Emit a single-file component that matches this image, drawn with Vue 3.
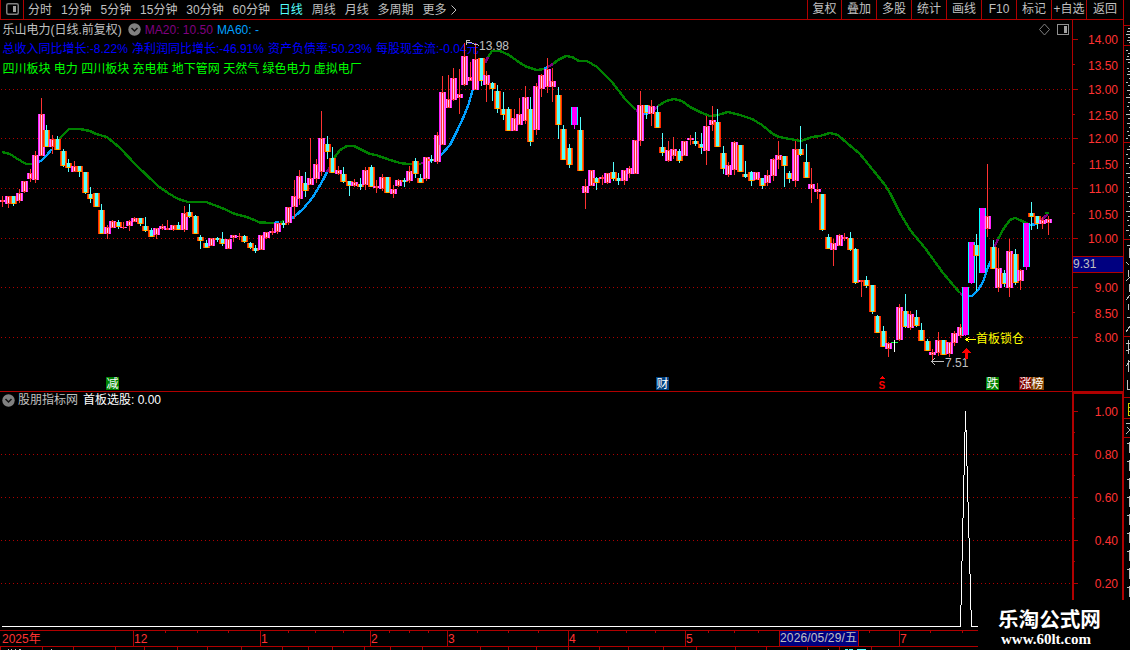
<script setup>
    import {ref} from 'vue';

    const periods = ["分时", "1分钟", "5分钟", "15分钟", "30分钟", "60分钟", "日线", "周线", "月线", "多周期", "更多"];
    const active = ref("日线");
    const tools = ["复权", "叠加", "多股", "统计", "画线", "F10", "标记", "+自选", "返回"];

    // kind (1 up, 0 down, 2 limit up, 3 flat), high, body top, body bottom, low
    const rows = [
        [1,196,200,202,207],[1,196,196,204,208],[0,196,196,204,206],[1,189,193,201,203],[1,181,181,192,193],
        [1,169,173,179,182],[1,151,155,180,183],[1,98,114,156,156],[0,125,130,147,147],[1,135,139,147,154],
        [0,136,139,150,150],[0,149,151,166,167],[0,159,163,168,172],[1,161,166,172,172],[0,166,166,172,177],
        [0,172,172,193,194],[0,187,194,199,203],[0,193,193,207,207],[0,204,210,234,234],[1,225,227,234,239],
        [1,220,221,228,228],[0,220,222,227,229],[1,222,227,228,229],[1,220,221,226,231],[1,217,218,222,222],
        [0,218,218,224,226],[0,217,226,231,232],[0,228,230,237,237],[1,228,228,235,239],[1,224,226,229,230],
        [1,220,228,230,230],[1,225,225,230,231],[0,222,225,230,230],[1,206,213,230,232],[0,204,212,217,218],
        [0,215,216,234,234],[0,235,237,241,249],[0,240,243,248,248],[1,238,238,246,246],[0,237,238,240,242],
        [0,232,239,244,246],[1,239,239,249,249],[1,235,235,238,242],[1,233,236,237,240],[0,235,236,242,243],
        [0,242,243,248,249],[0,245,248,251,253],[1,235,235,250,250],[1,232,232,238,239],[1,228,231,233,235],
        [1,223,223,232,234],[0,221,223,225,228],[1,207,207,223,225],[1,180,196,207,219],[1,170,176,199,205],
        [0,172,183,191,197],[1,138,178,185,185],[1,159,164,179,183],[1,111,138,172,176],[0,136,144,152,159],
        [0,147,158,173,173],[1,166,170,174,175],[0,167,174,182,183],[0,181,181,186,196],[1,179,182,186,187],
        [0,178,184,187,190],[1,167,170,185,190],[0,165,167,187,187],[1,180,186,188,193],[1,174,177,189,191],
        [0,177,177,193,193],[1,185,189,194,198],[1,179,180,186,187],[0,178,180,182,187],[1,166,171,181,183],
        [0,158,161,174,178],[0,174,178,183,183],[1,157,157,179,181],[0,155,159,161,163],[1,132,135,162,164],
        [1,76,92,145,145],[1,75,99,108,108],[1,68,78,100,101],[1,69,94,98,114],[1,43,56,85,86],
        [1,62,77,81,81],[1,43,59,90,90],[0,58,58,81,86],[1,71,75,85,102],[0,82,83,89,101],
        [0,85,91,109,113],[0,92,109,115,120],[0,107,109,131,131],[1,109,118,131,131],[1,98,114,125,125],
        [1,86,97,121,124],[0,97,109,142,146],[1,83,86,130,135],[1,74,75,89,97],[1,58,69,87,93],
        [1,68,81,87,102],[0,87,95,125,139],[0,125,129,160,160],[0,144,148,165,168],[2,107,107,125,129],
        [0,117,130,171,171],[1,179,186,193,209],[1,170,170,186,186],[0,177,178,183,190],[1,175,177,179,185],
        [1,173,173,183,184],[0,162,172,179,181],[0,173,178,181,185],[1,170,170,181,185],[1,166,168,174,178],
        [1,140,140,174,174],[1,91,105,141,146],[0,105,105,113,119],[1,100,106,114,126],[0,106,112,128,128],
        [0,133,147,153,156],[1,141,150,161,162],[1,137,149,156,159],[0,149,151,161,163],[1,141,141,156,156],
        [1,135,138,140,145],[0,132,141,144,146],[0,133,144,148,154],[1,116,126,151,165],[1,106,120,125,131],
        [0,109,122,147,147],[0,146,153,169,174],[1,162,165,175,177],[1,141,142,170,175],[0,145,145,172,172],
        [0,161,174,177,178],[0,171,172,181,186],[1,172,172,180,180],[0,178,178,186,189],[1,170,175,183,186],
        [1,158,159,176,181],[1,141,155,160,169],[0,156,156,166,187],[0,171,173,179,183],[1,141,149,181,187],
        [0,126,149,155,156],[0,144,162,178,178],[1,168,184,189,203],[1,183,189,192,199],[0,194,194,230,231],
        [0,234,237,249,249],[1,239,243,250,266],[1,234,235,246,246],[1,233,237,239,241],[0,232,238,250,251],
        [0,248,249,283,284],[1,280,280,282,297],[0,276,280,286,288],[0,285,285,312,314],[0,315,316,333,333],
        [0,326,331,347,347],[1,342,343,349,357],[3,340,342,343,352],[1,304,307,340,341],[0,294,311,327,328],
        [1,311,314,328,330],[0,310,317,326,327],[0,323,330,341,341],[0,339,341,351,351],[1,349,352,355,361],
        [1,332,340,353,356],[0,340,340,355,355],[1,342,342,354,357],[1,331,333,343,346],[1,324,327,336,338],
        [2,287,287,335,336],[2,242,242,283,284],[0,234,245,256,291],[2,208,208,273,273],[1,164,216,229,237],
        [0,240,247,269,269],[1,248,268,288,292],[0,270,273,284,287],[1,239,251,288,297],[0,249,254,283,285],
        [1,269,270,281,290],[2,223,223,267,270],[0,202,213,217,230],[0,216,216,224,229],[1,217,220,224,229],
        [1,216,219,223,235]
    ];
    const kinds = ["down", "up", "limit", "flat"];
    const candles = rows.map(([kind, high, top, bottom, low], i) => ({
        kind: kinds[kind],
        x: Math.floor(2.6 + 5.503 * i),
        high, top, bottom, low,
        h: Math.max(bottom - top, 1)
    }));

    const averages = [
        ["fall", "2,152 10,154 16,158 26,164 33,164"],
        ["rise", "38,162 41,161 46,156 52,149"],
        ["fall", "59,139 69,129 80,129 90,131 96,134 107,137 120,148 136,165 158,186 168,193 178,199 188,202 206,202 222,208 235,214 247,217 260,222.5 274,223"],
        ["rise", "274,223 279,222"],
        ["fall", "280,223 284,221"],
        ["rise", "291,219 295,216 303,209 313,197 323,180 327,172"],
        ["turn", "327,172 330,167"],
        ["fall", "334,158 340,150 347,146 354,146 362,150 370,154 376,155 390,160 400,163 408,164 421,164"],
        ["turn", "421,163 427,162"],
        ["rise", "429,161 437,159 441,155 450,145 457,131 464,116 469,103 472,92 474,86"],
        ["turn", "485,63 488,57"],
        ["fall", "488,57 492,51 500,51 509,55 520,63 527,67 537,70 544,69"],
        ["rise", "544,69 548,67"],
        ["turn", "548,67 553,64"],
        ["fall", "553,64 558,60 566,56 572,57 579,61 587,61 597,67 612,82 625,99 636,110"],
        ["turn", "636,110 640,112"],
        ["rise", "642,114 651,113"],
        ["turn", "652,112 658,106"],
        ["fall", "658,106 666,101 674,99 682,101 690,107 702,113 710,116 718,115 728,112 740,115 752,119 762,125 773,134 779,137 790,139 801,141 812,137 820,136 830,133 838,135 847,143 860,154 873,170 885,185 890,193 900,213 910,230 925,248 943,273 960,293"],
        ["turn", "960,293 964,296"],
        ["rise", "968,296 972,296 978,290 983,282 988,267 991,261"],
        ["turn", "994,248 998,239"],
        ["fall", "998,239 1004,228 1010,220 1015,218 1020,220 1028,224"],
        ["rise", "1030,225 1037,224"],
        ["turn", "1040,221 1048,214"],
        ["fall", "1045,213 1049,213"]
    ];

    const prices = [
        ["14.00", 39, 40], ["13.50", 64, 66], ["13.00", 89, 90], ["12.50", 114, 116], ["12.00", 138, 139],
        ["11.50", 163, 165], ["11.00", 188, 189], ["10.50", 213, 215], ["10.00", 238, 239],
        ["9.00", 287, 288], ["8.50", 312, 314], ["8.00", 337, 338]
    ];
    const grid = [89, 138, 188, 238, 287, 337];
    const levels = [["1.00", 411], ["0.80", 454], ["0.60", 497], ["0.40", 540], ["0.20", 583]];

    const months = [["2025年", 0], ["12", 133], ["1", 260], ["2", 370], ["3", 447], ["4", 568], ["5", 685], ["7", 899]];
    const weeks = [165, 197, 228, 288, 315, 343, 389, 409, 428, 477, 508, 538, 597, 626, 655, 708, 734, 758, 869, 930, 962];
    const lower = [0, 42, 73, 115, 144, 177, 207, 241, 282, 308, 332, 364, 390, 422, 480, 508, 536, 568, 599, 628, 663, 696, 735, 766, 807, 839, 871];

    const badges = [["减", 106, "#008000"], ["财", 656, "#004080"], ["跌", 986, "#008000"], ["涨", 1019, "#800000"], ["榜", 1031, "#804000"]];

    const sideLines = [25, 45, 142, 239, 336, 397, 418, 437];
    const sideMarks = [
        "M1128 28h2M1127 31h3M1126 34h4M1128 37h2M1127 40h3M1129 42h1",
        "M1126 50h2M1128 53h2M1127 56h2M1126 59h4M1128 62h2M1127 68h2M1128 71h2M1127 74h3M1129 78h1M1126 82h2M1128 85h2M1127 90h3M1129 94h1M1126 97h4M1128 102h2M1127 106h2M1129 110h1M1126 114h4M1128 118h2M1127 123h3M1129 127h1M1127 131h2M1128 135h2M1126 138h2",
        "M1129 146h1M1127 149h3M1126 154h2M1128 158h2M1126 163h3M1129 167h1M1126 173h4M1128 177h2M1127 182h2M1129 187h1M1126 192h3M1128 196h2M1127 201h3M1129 206h1M1126 211h4M1128 216h2M1127 220h2M1128 225h2M1126 230h3M1129 235h1",
        "M1127 245h3M1129 248v10M1126 262l3 3M1128 270v7M1126 281l4 -4M1129 284v8M1126 300l4 -5M1128 304v6M1127 317h3M1126 332l4 -6",
        "M1126 343h4M1128 340v14M1126 351l4 -2M1128 360v12M1126 366l4 -5M1127 380v9M1127 389h3",
        "M1126 423h4M1127 427l3 3M1126 434l4 -4"
    ];
    const ones = [447, 465, 483, 501, 519, 537, 555, 573, 591];
</script>

<template>
    <div class="terminal">
        <header class="toolbar">
            <div class="toggle">
                <svg width="13" height="12" viewBox="0 0 13 12">
                    <rect x=".75" y=".75" width="11.5" height="10.5" rx="1.5" fill="none" stroke="#808080" stroke-width="1.5"/>
                    <rect x="7" y="3" width="3" height="6" fill="#a0a0a0"/>
                </svg>
            </div>
            <nav class="periods">
                <span v-for="p in periods" :key="p" :class="{active: p === active}" @click="active = p">{{ p }}</span>
                <svg class="more" width="6" height="10" viewBox="0 0 6 10"><path d="M.5 .5L5 5L.5 9.5" fill="none" stroke="#c0c0c0"/></svg>
            </nav>
            <nav class="tools">
                <span v-for="t in tools" :key="t">{{ t }}</span>
            </nav>
        </header>

        <main class="body">
            <div class="charts">
                <section class="panel">
                    <svg width="1124" height="372" viewBox="0 20 1124 372" shape-rendering="crispEdges">
                        <line v-for="y in grid" :key="y" class="grid" x1="1" :y1="y + .5" x2="1072" :y2="y + .5"/>
                        <polyline v-for="(a, i) in averages" :key="i" :class="a[0]" :points="a[1]"/>

                        <g v-for="(c, i) in candles" :key="'c' + i" :class="c.kind">
                            <template v-if="c.kind === 'flat'">
                                <rect :x="c.x - 3" :y="c.top" width="7" height="1" class="dash"/>
                                <rect :x="c.x" :y="c.high" width="1" :height="c.low - c.high" class="wick"/>
                            </template>
                            <template v-else>
                                <rect :x="c.x" :y="c.high" width="1" :height="c.low - c.high" class="wick"/>
                                <rect :x="c.x - 3" :y="c.top" width="7" :height="c.h" class="edge"/>
                                <rect :x="c.x - 2" :y="c.top" width="5" :height="c.h" class="mid"/>
                                <rect :x="c.x - 1" :y="c.top" width="3" :height="c.h" class="core"/>
                                <rect v-if="c.kind === 'up' && c.h > 2" :x="c.x" :y="c.top + 1" width="1" :height="c.h - 2" class="shine"/>
                                <rect v-if="c.kind === 'down' && c.h > 3" :x="c.x - 1" :y="c.bottom - 1" width="3" height="1" class="foot"/>
                            </template>
                        </g>

                        <!-- high and low marks -->
                        <g class="mark">
                            <path d="M470 40h-4v5M466 42h4l4 2h3l2 2"/>
                            <text x="479" y="50">13.98</text>
                            <path d="M944 361.5H932M935 358l-3 3.5l3 3.5"/>
                            <text x="945" y="367">7.51</text>
                        </g>
                        <path class="signal" d="M966 348l5 5h-3v6h-3v-6h-4z"/>
                        <path class="hint" d="M976 339.5H966M969 337l-3 2.5l3 2.5"/>
                        <text class="hintText" x="976" y="343">首板锁仓</text>

                        <path d="M882 376l3 3h-6z" fill="#f00"/>
                        <text class="dollar" x="878.5" y="389">S</text>
                        <g v-for="b in badges" :key="b[0]">
                            <rect :x="b[1]" y="377" width="13" height="13" :fill="b[2]"/>
                            <text class="badge" :x="b[1] + .5" y="388">{{ b[0] }}</text>
                        </g>

                        <path d="M1044.5 24l5 5.5l-5 5.5l-5 -5.5z" fill="none" stroke="#808080" shape-rendering="auto"/>
                        <rect x="1057.5" y="24.5" width="11" height="10" rx="1" fill="none" stroke="#909090"/>
                        <rect x="1064" y="26" width="3" height="7" fill="#a0a0a0"/>

                        <rect class="rule" x="1072" y="20" width="1" height="372"/>
                        <rect class="rule" x="1123" y="20" width="1" height="372"/>
                        <rect class="rule" x="0" y="391" width="1124" height="1"/>
                        <g v-for="p in prices" :key="p[0]">
                            <rect class="rule" x="1073" :y="p[1]" :width="p[0].endsWith('.50') ? 2 : 5" height="1"/>
                            <text class="scale" x="1118" :y="p[2] + 4">{{ p[0] }}</text>
                        </g>
                        <rect x="1073" y="257" width="50" height="15" fill="#000080"/>
                        <rect class="rule" x="1072" y="256" width="52" height="1"/>
                        <rect class="rule" x="1072" y="272" width="52" height="1"/>
                        <text class="now" x="1073" y="268">9.31</text>
                    </svg>
                    <div class="info">
                        <p class="title">
                            <span>乐山电力(日线.前复权)</span>
                            <svg width="13" height="13" viewBox="0 0 13 13"><circle cx="6.5" cy="6.5" r="6.2" fill="#808080"/><path d="M3.5 5L6.5 8L9.5 5" fill="none" stroke="#111" stroke-width="1.5"/></svg>
                            <span class="ma20">MA20: 10.50</span>
                            <span class="ma60">MA60: -</span>
                        </p>
                        <p class="finance">总收入同比增长:-8.22% 净利润同比增长:-46.91% 资产负债率:50.23% 每股现金流:-0.04元</p>
                        <p class="sectors">四川板块 电力 四川板块 充电桩 地下管网 天然气 绿色电力 虚拟电厂</p>
                    </div>
                </section>

                <section class="panel">
                    <svg width="1124" height="238" viewBox="0 392 1124 238" shape-rendering="crispEdges">
                        <line v-for="l in levels.slice(1)" :key="l[0]" class="grid" x1="1" :y1="l[1] + .5" x2="1072" :y2="l[1] + .5"/>
                        <polyline class="pick" points="2,626.5 960.5,626.5 965.5,411 971.5,626.5 978,626.5"/>
                        <path class="frame" d="M1073 630V393H1123"/>
                        <path class="frame" d="M1123 392V630"/>
                        <g v-for="l in levels" :key="'l' + l[0]">
                            <rect class="rule" x="1074" :y="l[1]" width="4" height="1"/>
                            <rect class="rule" x="1074" :y="l[1] + 21" width="1" height="1"/>
                            <text class="scale" x="1118" :y="l[1] + 5">{{ l[0] }}</text>
                        </g>
                    </svg>
                    <p class="subtitle">
                        <svg width="13" height="13" viewBox="0 0 13 13"><circle cx="6.5" cy="6.5" r="6.2" fill="#808080"/><path d="M3.5 5L6.5 8L9.5 5" fill="none" stroke="#111" stroke-width="1.5"/></svg>
                        <span>股朋指标网</span>
                        <span class="value">首板选股: 0.00</span>
                    </p>
                </section>

                <svg width="1124" height="20" viewBox="0 630 1124 20" shape-rendering="crispEdges">
                    <rect class="rule" x="0" y="630" width="978" height="1"/>
                    <rect class="rule" x="0" y="646" width="978" height="1"/>
                    <rect v-for="w in weeks" :key="w" class="rule" :x="w" y="631" width="1" height="2"/>
                    <rect v-for="w in lower" :key="'b' + w" class="rule" :x="w" y="647" width="1" height="3"/>
                    <g v-for="m in months" :key="m[0]">
                        <rect v-if="m[1]" class="rule" :x="m[1]" y="630" width="1" height="16"/>
                        <text class="month" :x="m[1] + (m[1] ? 1 : 2)" y="643">{{ m[0] }}</text>
                    </g>
                    <rect x="779" y="631" width="79" height="15" fill="#000080"/>
                    <rect class="rule" x="779" y="631" width="1" height="15"/>
                    <rect class="rule" x="858" y="631" width="1" height="15"/>
                    <text class="now" x="780" y="642" textLength="77">2026/05/29/五</text>
                    <path d="M8 649.5h1M11 649.5h1M15 649.5h1M19 649.5h2M51 649.5h1M828 649.5h1" stroke="#c0c0c0"/>
                    <path d="M845 649.5h3M849 649.5h4M857 649.5h9" stroke="#54ffff"/>
                </svg>
            </div>

            <svg class="side" width="6" height="630" viewBox="1124 20 6 630" shape-rendering="crispEdges">
                <rect v-for="y in sideLines" :key="y" class="rule" x="1124" :y="y" width="6" height="1"/>
                <path v-for="(m, i) in sideMarks" :key="'m' + i" :d="m" class="glyph"/>
                <path d="M1130 403h-2v12h2M1128 407h2M1128 411h2" fill="none" stroke="#d0d000"/>
                <path v-for="y in ones" :key="'o' + y" class="one" :d="`M1127 ${y - 3.5}h2M1129.5 ${y - 5}v11`"/>
            </svg>
        </main>

        <footer class="watermark">
            <strong>乐淘公式网</strong>
            <b>www.60lt.com</b>
        </footer>
    </div>
</template>

<style>
    body {
        margin: 0;
        background: #000;
    }
</style>

<style scoped>
    .terminal {
        position: relative;
        width: 1130px;
        height: 650px;
        overflow: hidden;
        background: #000;
        color: #c0c0c0;
        font: 12px/18px "Liberation Sans", "Noto Sans CJK SC", sans-serif;
    }

    svg {
        display: block;
        flex: none;
    }

    p {
        margin: 0;
        white-space: nowrap;
    }

    .toolbar {
        display: flex;
        box-sizing: border-box;
        width: 1124px;
        height: 20px;
        border: solid #b00000;
        border-width: 0 1px 1px;
    }

    .toggle {
        display: flex;
        align-items: center;
        justify-content: center;
        width: 21px;
        border-right: 1px solid #b00000;
        padding: 0 0 2px 1px;
    }

    .periods {
        display: flex;
        align-items: center;
        gap: 8.9px;
        padding-left: 4px;
        cursor: pointer;
    }

    .active {
        color: #54ffff;
    }

    .more {
        margin-left: -4px;
    }

    .tools {
        display: grid;
        grid-template-columns: 34px repeat(7, 35px) 37px;
        margin-left: auto;
    }

    .tools span {
        border-left: 1px solid #b00000;
        text-align: center;
        white-space: nowrap;
    }

    .body {
        display: flex;
    }

    .charts {
        width: 1124px;
    }

    .panel {
        position: relative;
        isolation: isolate;
    }

    /* captions stay under the candles */
    .info {
        position: absolute;
        z-index: -1;
        top: 0;
        left: 2.5px;
        line-height: 20px;
    }

    .title {
        display: flex;
        align-items: center;
        gap: 4px;
        height: 19px;
    }

    .title svg {
        margin: 0 0 0 2px;
    }

    .ma20 {
        color: #800080;
    }

    .ma60 {
        color: #00a0ff;
    }

    .finance {
        color: #0000ff;
        word-spacing: 0.7px;
    }

    .sectors {
        color: #00ff00;
    }

    .subtitle {
        display: flex;
        align-items: center;
        gap: 3px;
        position: absolute;
        top: -1px;
        left: 2px;
    }

    .value {
        color: #fff;
        margin-left: 2px;
    }

    .grid {
        stroke: #b00000;
        stroke-dasharray: 1 3;
    }

    .rule {
        fill: #b00000;
    }

    .frame {
        fill: none;
        stroke: #b00000;
        stroke-width: 2;
    }

    polyline {
        fill: none;
        stroke-width: 2.4;
    }

    .fall {
        stroke: #008000;
    }

    .rise {
        stroke: #00a0ff;
    }

    .turn {
        stroke: #800080;
    }

    .pick {
        stroke: #fff;
        stroke-width: 1;
    }

    .up .wick { fill: #ff3232; }
    .up .edge { fill: #ff20ff; }
    .up .mid { fill: #ff80ff; }
    .up .core { fill: #ff3232; }
    .up .shine { fill: #ffd0ff; }

    .down .wick { fill: #54ffff; }
    .down .edge { fill: #ff2800; }
    .down .mid { fill: #ff8000; }
    .down .core { fill: #54ffff; }
    .down .foot { fill: #ffc000; }

    .limit .wick { fill: #ff00ff; }
    .limit .edge { fill: #00ffff; }
    .limit .mid, .limit .core { fill: #ff00ff; }

    .flat .wick { fill: #fff; }
    .flat .dash { fill: #00ff40; }

    .mark path {
        fill: none;
        stroke: #c0c0c0;
    }

    .mark text, .now {
        fill: #c0c0c0;
    }

    .signal {
        fill: #ff0000;
    }

    .hint {
        fill: none;
        stroke: #ffff00;
    }

    .hintText {
        fill: #ffff00;
    }

    .dollar {
        fill: #ff0000;
        font-size: 10px;
        font-weight: bold;
    }

    .badge {
        fill: #fff;
    }

    .scale {
        fill: #ff3232;
        text-anchor: end;
    }

    .month {
        fill: #ff3232;
    }

    .glyph, .one {
        fill: none;
        stroke: #c0c0c0;
    }

    .watermark {
        position: absolute;
        right: 0;
        bottom: 0;
        display: flex;
        flex-direction: column;
        box-sizing: border-box;
        width: 152px;
        height: 50px;
        padding: 9px 0 0 20px;
        background: #000;
        color: #fff;
    }

    .watermark strong {
        font-size: 20.6px;
        line-height: 22px;
    }

    .watermark b {
        padding-left: 3px;
        font: bold 15px/17px "Liberation Serif", serif;
    }
</style>
